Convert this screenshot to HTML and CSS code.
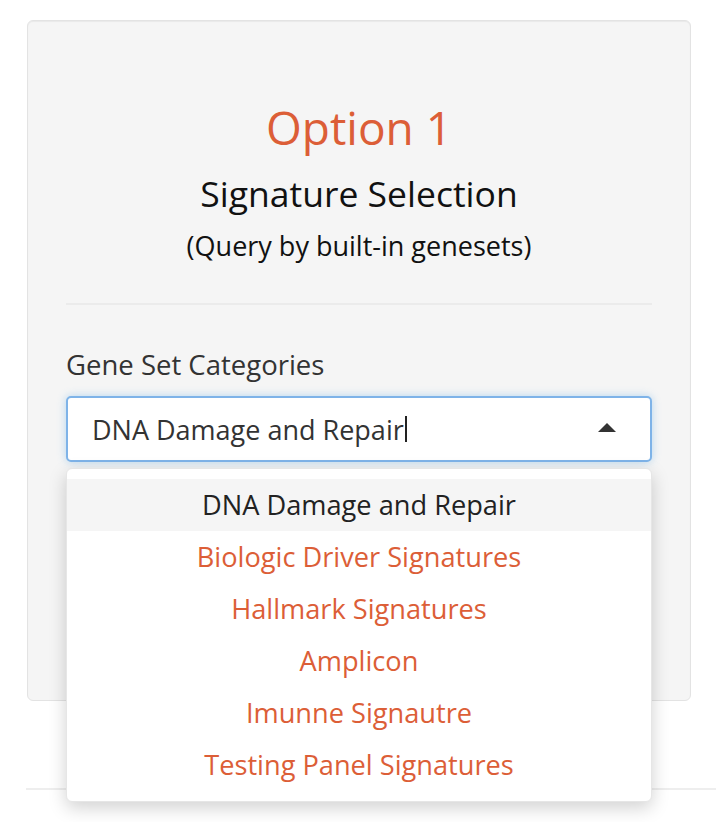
FILE: index.html
```html
<!DOCTYPE html>
<html lang="en">
<head>
<meta charset="utf-8">
<title>Signature Selection</title>
<link rel="stylesheet" href="styles.css">
</head>
<body>
<div class="page">
  <div class="well">
    <h1 class="title">Option 1</h1>
    <h3 class="subtitle">Signature Selection</h3>
    <h4 class="hint">(Query by built-in genesets)</h4>
    <hr class="rule">
    <div class="field">
      <label class="label">Gene Set Categories</label>
      <div class="select">
        <div class="select-input"><span class="value">DNA Damage and Repair</span><span class="caret"></span></div>
        <span class="arrow"></span>
        <ul class="menu">
          <li class="option active">DNA Damage and Repair</li>
          <li class="option">Biologic Driver Signatures</li>
          <li class="option">Hallmark Signatures</li>
          <li class="option">Amplicon</li>
          <li class="option">Imunne Signautre</li>
          <li class="option">Testing Panel Signatures</li>
        </ul>
      </div>
    </div>
  </div>
  <hr class="bottom-rule">
</div>
</body>
</html>
```
FILE: styles.css
```css
html, body {
  margin: 0;
  padding: 0;
  background: #ffffff;
}
body {
  font-family: "Open Sans", "Lato", sans-serif;
  color: #333333;
}
.page {
  box-sizing: border-box;
  min-height: 822px;
  padding-top: 20px;
  overflow: hidden;
}
.well {
  box-sizing: border-box;
  margin-left: 27px;
  width: 664px;
  height: 681px;
  background: #f5f5f5;
  border: 1px solid #e3e3e3;
  border-radius: 6px;
  box-shadow: inset 0 1px 1px rgba(0, 0, 0, 0.05);
  padding: 0 38px;
  text-align: center;
}
.title {
  margin: 79px 0 0;
  font-size: 46px;
  font-weight: 400;
  line-height: 54px;
  color: #dc5e37;
}
.subtitle {
  margin: 19px 0 0;
  font-size: 35.5px;
  font-weight: 400;
  line-height: 40px;
  color: #111111;
}
.hint {
  margin: 17px 0 0;
  font-size: 27px;
  font-weight: 400;
  line-height: 32px;
  color: #111111;
}
.rule {
  margin: 41px 0 0;
  border: 0;
  border-top: 2px solid #ebebeb;
  height: 0;
}
.field {
  text-align: left;
  margin-top: 44px;
}
.label {
  display: block;
  font-size: 27.5px;
  line-height: 32px;
  color: #333333;
  margin-bottom: 15px;
}
.select {
  position: relative;
}
.select-input {
  box-sizing: border-box;
  height: 66px;
  background: #ffffff;
  border: 2px solid #7eb3e8;
  border-radius: 5px;
  box-shadow: 0 0 8px rgba(102, 175, 233, 0.45);
  padding: 0 24px;
  display: flex;
  align-items: center;
  font-size: 27px;
  color: #333333;
}
.caret {
  display: inline-block;
  width: 2px;
  height: 26px;
  background: #222222;
  margin-left: 1px;
}
.arrow {
  position: absolute;
  right: 36px;
  top: 27px;
  width: 0;
  height: 0;
  border-left: 9px solid transparent;
  border-right: 9px solid transparent;
  border-bottom: 9px solid #333333;
}
.menu {
  position: absolute;
  left: 0;
  right: 0;
  top: 72px;
  margin: 0;
  padding: 10px 0;
  list-style: none;
  background: #ffffff;
  border: 1px solid #e6e6e6;
  border-radius: 6px;
  box-shadow: 0 6px 18px rgba(0, 0, 0, 0.18);
  z-index: 5;
}
.option {
  height: 52px;
  line-height: 52px;
  text-align: center;
  font-size: 27.2px;
  color: #dc5e37;
}
.option.active {
  background: #f5f5f5;
  color: #222222;
}
.bottom-rule {
  margin: 87px 0 0 26px;
  border: 0;
  border-top: 2px solid #eeeeee;
  height: 0;
}
```
